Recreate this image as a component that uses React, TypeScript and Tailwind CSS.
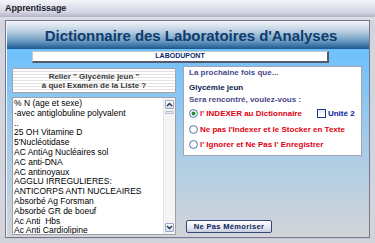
import React from "react";

const items = [
  "% N (age et sexe)",
  "-avec antiglobuline polyvalent",
  "..",
  "25 OH Vitamine D",
  "5'Nucléotidase",
  "AC AntiAg Nucléaires sol",
  "AC anti-DNA",
  "AC antinoyaux",
  "AGGLU IRREGULIERES:",
  "ANTICORPS ANTI NUCLEAIRES",
  "Absorbé Ag Forsman",
  "Absorbé GR de boeuf",
  "Ac Anti  Hbs",
  "Ac Anti Cardiolipine",
];

function Radio({ checked }: { checked?: boolean }) {
  return (
    <svg width="9" height="9" viewBox="0 0 9 9" className="shrink-0">
      <circle cx="4.5" cy="4.5" r="3.9" fill="#ffffff" stroke="#4a72a4" strokeWidth="1" />
      {checked && <circle cx="4.5" cy="4.5" r="2" fill="#1f8f2f" />}
    </svg>
  );
}

function ScrollBtn({ up }: { up?: boolean }) {
  return (
    <div className="w-[9px] h-[9px] rounded-[1px] border border-[#98a8c8] bg-[linear-gradient(#ffffff,#d4dcea)] flex items-center justify-center">
      <svg width="7" height="5" viewBox="0 0 7 5">
        <path
          d={up ? "M1 4 L3.5 1.5 L6 4" : "M1 1 L3.5 3.5 L6 1"}
          fill="none"
          stroke="#2a3040"
          strokeWidth="1.4"
        />
      </svg>
    </div>
  );
}

export default function App() {
  return (
    <div className="w-[375px] h-[243px] overflow-hidden flex flex-col bg-[#d4d4dc] font-['Liberation_Sans',Arial,sans-serif]">
      {/* title bar */}
      <div className="h-[17px] shrink-0 bg-[linear-gradient(#f4f4fa,#d6d6e4_70%,#b4b4c8)] flex items-center pl-[5px] text-[9px] font-bold text-[#1c1c2c] tracking-[-0.1px]">
        Apprentissage
      </div>
      <div className="h-[3px] shrink-0 bg-[#dcdce4]" />
      {/* frame */}
      <div className="ml-[5px] w-[365px] h-[218px] shrink-0 border border-[#76768e] flex flex-col">
        <div className="flex-1 border-l border-t border-[#f4f4f8] flex flex-col">
          {/* header */}
          <div className="h-[27px] shrink-0 bg-[linear-gradient(#eef2f6,#b8cee0_35%,#6e9cc4_70%,#1a5890_100%)] flex items-center justify-center pl-[6px] pt-[1px] text-[15px] font-bold text-[#0f3c6c] tracking-[-0.05px]">
            Dictionnaire des Laboratoires d'Analyses
          </div>
          {/* body */}
          <div className="flex-1 bg-[linear-gradient(#6ec0fc,#a6cce8_50%,#d2d4d8)] flex flex-col">
            <div className="mt-[2px] ml-[25px] w-[297px] h-[12px] bg-white border-l border-t border-[#c8c8c8] border-r-2 border-b-2 border-r-[#585868] border-b-[#585868] flex items-center justify-center text-[7px] font-bold text-[#0c2a6a]">
              LABODUPONT
            </div>
            <div className="mt-[3px] flex">
              {/* left column */}
              <div className="ml-[5px] mt-[2px] w-[164px] flex flex-col">
                <div className="h-[25px] border border-[#a4a4ac] bg-[repeating-linear-gradient(#ffffff_0px,#ffffff_2px,#e2e2e2_2px,#e2e2e2_3px)] flex flex-col items-center justify-center text-[8px] leading-[9px] font-bold text-[#3c3c3c]">
                  <div>Relier " Glycémie jeun "</div>
                  <div>à quel Examen de la Liste ?</div>
                </div>
                <div className="mt-[4px] h-[138px] border border-[#a0a0a8] bg-white flex">
                  <div className="flex-1 pt-[1px] pl-[1px] text-[8.5px] leading-[9.8px] text-black overflow-hidden whitespace-pre">
                    {items.map((t, i) => (
                      <div key={i}>{t}</div>
                    ))}
                  </div>
                  <div className="w-[12px] bg-[#f4f4f4] border-l border-[#e4e4e4] flex flex-col items-center pt-[2px] pb-[2px]">
                    <ScrollBtn up />
                    <div className="mt-[2px] w-[9px] h-[3px] border border-[#b8c0d0] bg-[#e8ecf2] rounded-[1px]" />
                    <div className="flex-1" />
                    <ScrollBtn />
                  </div>
                </div>
              </div>
              {/* right column */}
              <div className="ml-[7px] w-[179px] flex flex-col">
                <div className="h-[90px] border border-[#a0a4b4] bg-white flex flex-col pl-[5px] text-[8px] font-bold">
                  <div className="mt-[1px] h-[9px] leading-[9px] text-[#4a4a8a]">La prochaine fois que...</div>
                  <div className="mt-[6px] h-[9px] leading-[9px] text-[#0c1a4a]">Glycémie jeun</div>
                  <div className="mt-[3px] h-[9px] leading-[9px] text-[#4a4a8a]">Sera rencontré, voulez-vous :</div>
                  <div className="mt-[5px] h-[9px] leading-[9px] flex items-center">
                    <Radio checked />
                    <span className="ml-[2px] text-[#e00010]">l' INDEXER au Dictionnaire</span>
                    <div className="ml-[15px] w-[9px] h-[9px] border border-[#1c3a88] bg-[linear-gradient(#e8ecf4,#ffffff)]" />
                    <span className="ml-[2px] text-[#0a1aa0]">Unité 2</span>
                  </div>
                  <div className="mt-[7px] h-[9px] leading-[9px] flex items-center">
                    <Radio />
                    <span className="ml-[2px] text-[#e00010]">Ne pas l'Indexer et le Stocker en Texte</span>
                  </div>
                  <div className="mt-[6px] h-[9px] leading-[9px] flex items-center">
                    <Radio />
                    <span className="ml-[2px] text-[#e00010]">l' Ignorer et Ne Pas l' Enregistrer</span>
                  </div>
                </div>
                <div className="mt-[64px] ml-[3px] w-[86px] h-[13px] rounded-[2px] border border-[#34467a] bg-[linear-gradient(#ffffff,#e6e8f2_60%,#c8cce0)] flex items-center justify-center text-[7.5px] font-bold tracking-[0.35px] text-[#0c1e5c]">
                  Ne Pas Mémoriser
                </div>
              </div>
            </div>
          </div>
        </div>
      </div>
      <div className="flex-1 border-t border-[#c8c8d4]" />
    </div>
  );
}
